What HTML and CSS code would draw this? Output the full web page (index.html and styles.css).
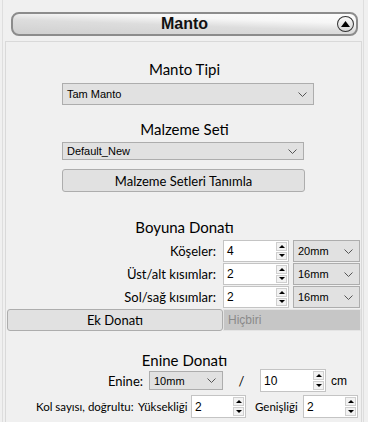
FILE: index.html
```html
<!DOCTYPE html>
<html lang="tr">
<head>
  <meta charset="UTF-8">
  <title>Manto</title>
  <link rel="stylesheet" href="styles.css">
</head>
<body>

<div class="frame">
  <!-- collapsible header -->
  <div class="header">
    <span class="header-title">Manto</span>
    <span class="collapse">
      <svg width="9" height="6" viewBox="0 0 9 6"><path d="M4.5 0 L9 6 L0 6 Z" fill="#000"/></svg>
    </span>
  </div>

  <div class="panel">
    <div class="title t-first">Manto Tipi</div>
    <div class="select sel-type">
      <span>Tam Manto</span>
      <svg class="chev" width="9" height="5" viewBox="0 0 9 5"><path d="M0.5 0.5 L4.5 4.5 L8.5 0.5" fill="none" stroke="#555" stroke-width="1"/></svg>
    </div>

    <div class="title t-set">Malzeme Seti</div>
    <div class="select sel-set">
      <span>Default_New</span>
      <svg class="chev" width="9" height="5" viewBox="0 0 9 5"><path d="M0.5 0.5 L4.5 4.5 L8.5 0.5" fill="none" stroke="#555" stroke-width="1"/></svg>
    </div>
    <div class="btn btn-define">Malzeme Setleri Tanımla</div>

    <!-- Boyuna donati -->
    <div class="title t-boyuna">Boyuna Donatı</div>
    <div class="rows">
      <label>Köşeler:</label>
      <div class="spin"><span class="val">4</span><span class="arrows"><i class="up"></i><i class="down"></i></span></div>
      <div class="select">
        <span>20mm</span>
        <svg class="chev" width="9" height="5" viewBox="0 0 9 5"><path d="M0.5 0.5 L4.5 4.5 L8.5 0.5" fill="none" stroke="#555" stroke-width="1"/></svg>
      </div>

      <label>Üst/alt kısımlar:</label>
      <div class="spin"><span class="val">2</span><span class="arrows"><i class="up"></i><i class="down"></i></span></div>
      <div class="select">
        <span>16mm</span>
        <svg class="chev" width="9" height="5" viewBox="0 0 9 5"><path d="M0.5 0.5 L4.5 4.5 L8.5 0.5" fill="none" stroke="#555" stroke-width="1"/></svg>
      </div>

      <label>Sol/sağ kısımlar:</label>
      <div class="spin"><span class="val">2</span><span class="arrows"><i class="up"></i><i class="down"></i></span></div>
      <div class="select">
        <span>16mm</span>
        <svg class="chev" width="9" height="5" viewBox="0 0 9 5"><path d="M0.5 0.5 L4.5 4.5 L8.5 0.5" fill="none" stroke="#555" stroke-width="1"/></svg>
      </div>
    </div>
    <div class="extra">
      <div class="btn btn-extra">Ek Donatı</div>
      <div class="disabled">Hiçbiri</div>
    </div>

    <!-- Enine donati -->
    <div class="title t-enine">Enine Donatı</div>
    <div class="enine-row">
      <span class="enine-label">Enine:</span>
      <div class="select sel-enine">
        <span>10mm</span>
        <svg class="chev" width="9" height="5" viewBox="0 0 9 5"><path d="M0.5 0.5 L4.5 4.5 L8.5 0.5" fill="none" stroke="#555" stroke-width="1"/></svg>
      </div>
      <span class="slash">/</span>
      <div class="spin spin-tall"><span class="val">10</span><span class="arrows"><i class="up"></i><i class="down"></i></span></div>
      <span class="unit">cm</span>
    </div>
    <div class="kol-row">
      <span class="kol-label">Kol sayısı, doğrultu:</span>
      <span class="kol-h">Yüksekliği</span>
      <div class="spin spin-small"><span class="val">2</span><span class="arrows"><i class="up"></i><i class="down"></i></span></div>
      <span class="kol-w">Genişliği</span>
      <div class="spin spin-small"><span class="val">2</span><span class="arrows"><i class="up"></i><i class="down"></i></span></div>
    </div>
    <div class="cut">Etriye Sıklaştırma Bölgesi</div>
  </div>
</div>

</body>
</html>
```

FILE: styles.css
```css
* { box-sizing: border-box; }
body { margin: 0; background: #f0f0f0; color: #000; font-family: Lato, "Noto Sans", sans-serif; }

.frame { margin-left: 2px; width: 362px; height: 422px; border-left: 1px solid #dedede; border-right: 1px solid #dedede; padding-top: 12px; overflow: hidden; }

.header { margin: 0 5px 0 8px; height: 24px; border: 2px solid #8c8c8c; border-radius: 8px; background: linear-gradient(182deg, #fdfdfd 0%, #f6f6f6 30%, #dddddd 55%, #d0d0d0 100%); display: grid; grid-template-columns: 1fr auto 1fr; align-items: center; }
.header-title { grid-column: 2; font: bold 16px "Liberation Sans", Arial, sans-serif; color: #111; }
.collapse { grid-column: 3; justify-self: end; margin-right: 2px; width: 17px; height: 16px; border: 1.5px solid #333; border-radius: 50%; background: linear-gradient(#fafafa, #d6d6d6); display: flex; align-items: center; justify-content: center; padding-bottom: 1px; }

.panel { margin: 5px 1px 0 2px; height: 400px; border: 1px solid #d9d9d9; border-bottom: 0; }

.title { font-size: 15px; line-height: 18px; text-align: center; padding-left: 2px; }
.t-first { margin-top: 18px; }
.t-set { margin-top: 15px; }
.t-boyuna { margin-top: 26px; }
.t-enine { margin-top: 20px; }

.select { display: flex; align-items: center; justify-content: space-between; background: #e1e1e1; border: 1px solid #adadad; padding: 0 6px 0 4px; font: 11px "Liberation Sans", Arial, sans-serif; }
.chev { flex: none; }
.sel-type { margin: 5px 0 0 56px; width: 252px; height: 22px; }
.sel-set { margin: 4px 0 0 56px; width: 242px; height: 18px; }

.btn { display: flex; align-items: center; justify-content: center; background: #e1e1e1; border: 1px solid #adadad; border-radius: 3px; font-size: 13px; }
.btn-define { margin: 9px 0 0 56px; width: 243px; height: 23px; }

.rows { margin-top: 4px; display: grid; grid-template-columns: 213px 66px 67px; grid-auto-rows: 22px; column-gap: 4px; row-gap: 1px; }
.rows label { display: flex; align-items: center; justify-content: flex-end; padding-right: 3px; font-size: 13px; }

.spin { display: flex; border: 1px solid #c4c4c4; background: #fff; }
.spin .val { flex: 1; display: flex; align-items: center; padding-left: 3px; font: 12px "Liberation Sans", Arial, sans-serif; }
.arrows { width: 12px; display: flex; flex-direction: column; gap: 1px; padding: 1px 1px 1px 0; }
.arrows i { flex: 1; display: flex; align-items: center; justify-content: center; border: 1px solid #cfcfcf; background: #f2f2f2; }
.arrows .up::before { content: ''; border-left: 3px solid transparent; border-right: 3px solid transparent; border-bottom: 3px solid #000; }
.arrows .down::before { content: ''; border-left: 3px solid transparent; border-right: 3px solid transparent; border-top: 3px solid #000; }

.extra { margin-top: 1px; padding-left: 1px; display: flex; height: 22px; }
.btn-extra { width: 216px; }
.disabled { flex: 1; display: flex; align-items: center; padding-left: 4px; background: #c6c6c6; border: 1px solid #e4e4e4; color: #8a8a8a; font: 12px "Liberation Sans", Arial, sans-serif; }

.enine-row { display: flex; align-items: center; height: 23px; font-size: 13px; }
.enine-label { width: 137px; text-align: right; }
.sel-enine { margin-left: 6px; width: 74px; height: 19px; }
.slash { width: 37px; text-align: center; font-size: 13px; }
.spin-tall { width: 66px; height: 23px; }
.unit { margin-left: 5px; font: 12px "Liberation Sans", Arial, sans-serif; }

.kol-row { margin-top: 3px; display: flex; align-items: center; height: 23px; font-size: 11.5px; }
.kol-label { width: 132px; padding-left: 30px; white-space: nowrap; }
.kol-h { width: 53px; }
.spin-small { width: 55px; height: 23px; }
.kol-w { width: 57px; padding-left: 9px; }

.cut { margin-top: 1px; padding-left: 152px; font-size: 12px; }
```
